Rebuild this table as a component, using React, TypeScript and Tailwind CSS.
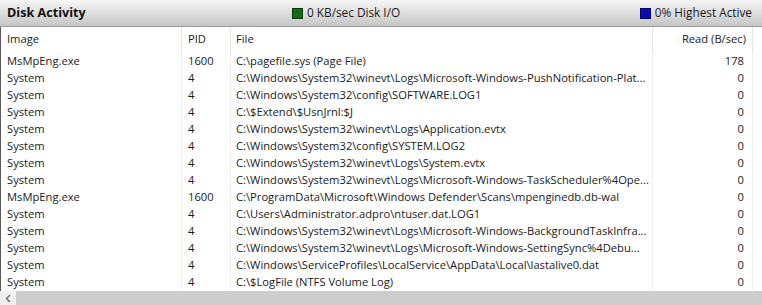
import React from 'react';

type Row = { image: string; pid: string; file: string; read: string };

const rows: Row[] = [
  { image: 'MsMpEng.exe', pid: '1600', file: 'C:\\pagefile.sys (Page File)', read: '178' },
  { image: 'System', pid: '4', file: 'C:\\Windows\\System32\\winevt\\Logs\\Microsoft-Windows-PushNotification-Plat...', read: '0' },
  { image: 'System', pid: '4', file: 'C:\\Windows\\System32\\config\\SOFTWARE.LOG1', read: '0' },
  { image: 'System', pid: '4', file: 'C:\\$Extend\\$UsnJrnl:$J', read: '0' },
  { image: 'System', pid: '4', file: 'C:\\Windows\\System32\\winevt\\Logs\\Application.evtx', read: '0' },
  { image: 'System', pid: '4', file: 'C:\\Windows\\System32\\config\\SYSTEM.LOG2', read: '0' },
  { image: 'System', pid: '4', file: 'C:\\Windows\\System32\\winevt\\Logs\\System.evtx', read: '0' },
  { image: 'System', pid: '4', file: 'C:\\Windows\\System32\\winevt\\Logs\\Microsoft-Windows-TaskScheduler%4Ope...', read: '0' },
  { image: 'MsMpEng.exe', pid: '1600', file: 'C:\\ProgramData\\Microsoft\\Windows Defender\\Scans\\mpenginedb.db-wal', read: '0' },
  { image: 'System', pid: '4', file: 'C:\\Users\\Administrator.adpro\\ntuser.dat.LOG1', read: '0' },
  { image: 'System', pid: '4', file: 'C:\\Windows\\System32\\winevt\\Logs\\Microsoft-Windows-BackgroundTaskInfra...', read: '0' },
  { image: 'System', pid: '4', file: 'C:\\Windows\\System32\\winevt\\Logs\\Microsoft-Windows-SettingSync%4Debu...', read: '0' },
  { image: 'System', pid: '4', file: 'C:\\Windows\\ServiceProfiles\\LocalService\\AppData\\Local\\lastalive0.dat', read: '0' },
  { image: 'System', pid: '4', file: 'C:\\$LogFile (NTFS Volume Log)', read: '0' },
];

// column widths: Image | PID | File | Read | filler
const cols = 'grid grid-cols-[181px_49px_422px_100px_1fr]';

const App: React.FC = () => {
  return (
    <div
      className="w-[762px] h-[305px] overflow-hidden bg-white text-[11.2px] text-[#1a1a1a] flex flex-col"
      style={{ fontFamily: '"Open Sans", "Noto Sans", Arial, sans-serif' }}
    >
      {/* title bar */}
      <div className="h-[27px] shrink-0 flex items-center bg-gradient-to-b from-[#f6f6f6] to-[#c6c6c6] border-b border-[#9a9a9a]">
        <div className="w-[292px] pl-[7px] font-bold text-[12.6px] text-[#111]">Disk Activity</div>
        <div className="flex items-center gap-[4px]">
          <span className="w-[11px] h-[11px] bg-[#0f6b14] border border-[#0a3d0c]" />
          <span className="text-[11.8px]">0 KB/sec Disk I/O</span>
        </div>
        <div className="ml-auto pr-[10px] flex items-center gap-[4px]">
          <span className="w-[11px] h-[11px] bg-[#0a0ab0] border border-[#06066b]" />
          <span className="text-[11.8px]">0% Highest Active</span>
        </div>
      </div>

      {/* table */}
      <div className="flex-1 flex flex-col border-l border-[#5a5a5a] min-h-0">
        <div className={`${cols} h-[25px] shrink-0`}>
          <div className="pl-[6px] flex items-center border-r border-[#e5e5e5]">Image</div>
          <div className="pl-[6px] flex items-center border-r border-[#e5e5e5]">PID</div>
          <div className="pl-[5px] flex items-center border-r border-[#e5e5e5]">File</div>
          <div className="pr-[6px] flex items-center justify-end border-r border-[#e5e5e5]">Read (B/sec)</div>
          <div />
        </div>
        <div className="flex-1 flex flex-col">
          {rows.map((r, i) => (
            <div key={i} className={`${cols} h-[17px] leading-[17px]`}>
              <div className="pl-[6px] border-r border-[#efefef] whitespace-nowrap overflow-hidden">{r.image}</div>
              <div className="pl-[6px] border-r border-[#efefef]">{r.pid}</div>
              <div className="pl-[5px] border-r border-[#efefef] whitespace-nowrap">{r.file}</div>
              <div className="pr-[8px] text-right border-r border-[#efefef]">{r.read}</div>
              <div />
            </div>
          ))}
        </div>
      </div>

      {/* horizontal scrollbar */}
      <div className="h-[14px] shrink-0 flex">
        <div className="w-[16px] bg-[#f0f0f0] flex items-center justify-center">
          <svg width="6" height="9" viewBox="0 0 6 9">
            <path d="M5 1 L1.5 4.5 L5 8" fill="none" stroke="#606060" strokeWidth="1.3" />
          </svg>
        </div>
        <div className="flex-1 bg-[#cdcdcd]" />
      </div>
    </div>
  );
};

export default App;
